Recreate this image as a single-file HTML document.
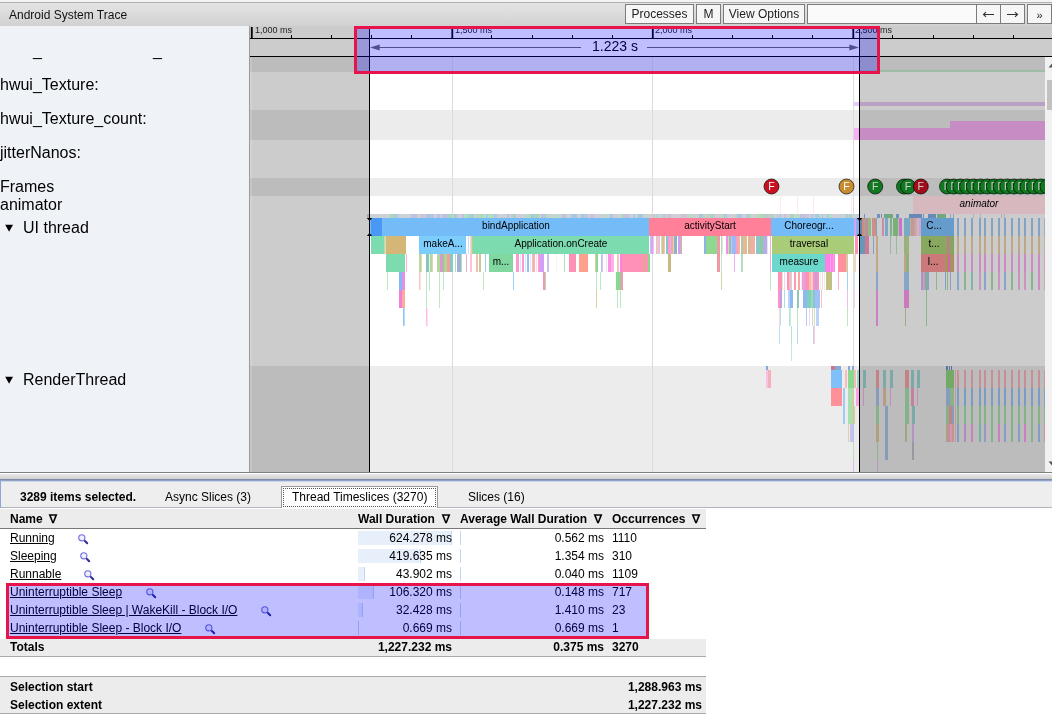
<!DOCTYPE html>
<html>
<head>
<meta charset="utf-8">
<title>Android System Trace</title>
<style>
html,body{margin:0;padding:0;}
body{width:1052px;height:720px;overflow:hidden;background:#fff;position:relative;font-family:"Liberation Sans",sans-serif;color:#000;}
.abs{position:absolute;}
#hdr{left:0;top:0;width:1052px;height:26px;background:linear-gradient(#f4f4f4 0px,#f4f4f4 2px,#e5e5e5 2px,#d1d1d1 26px);}
#hdr .title{left:9px;top:7.5px;font-size:12px;line-height:14px;color:#111;}
.btn{top:4px;height:18px;border:1px solid #7c7c7c;background:#f6f6f6;font-size:12px;line-height:19px;text-align:center;color:#222;box-sizing:content-box;}
#left{left:0;top:26px;width:249px;height:446px;background:#eff3f8;}
.lab{left:0;font-size:16px;line-height:18px;white-space:nowrap;}
.row{left:250px;width:795px;}
.sl{font-size:10px;line-height:12px;color:#000;text-align:center;white-space:nowrap;}
.tk{font-size:9px;line-height:9px;color:#222;top:26px;}
#an{left:0;top:472px;width:1052px;height:248px;background:#fff;}
.t12{font-size:12px;line-height:14px;white-space:nowrap;}
.b{font-weight:bold;}
.u{text-decoration:underline;}
.r{text-align:right;}
</style>
</head>
<body>
<div id="wrap" style="position:absolute;left:0;top:0;width:1052px;height:720px;will-change:transform;opacity:0.9999">
<!-- ======= header ======= -->
<div id="hdr" class="abs">
  <div class="abs" style="left:0;top:2px;width:1052px;height:1px;background:#b0b0b0"></div>
  <div class="abs title">Android System Trace</div>
  <div class="abs btn" style="left:625px;width:67px;">Processes</div>
  <div class="abs btn" style="left:696px;width:23px;">M</div>
  <div class="abs btn" style="left:723px;width:80px;">View Options</div>
  <div class="abs btn" style="left:807px;width:168px;background:#fafafa"></div>
  <div class="abs btn" style="left:976px;width:23px;"><svg width="13" height="9" viewBox="0 0 13 9" style="position:absolute;left:5px;top:5px"><path d="M12 4.5 H1.5 M4 2.2 L1.5 4.5 L4 6.8" fill="none" stroke="#333" stroke-width="1.1"/></svg></div>
  <div class="abs btn" style="left:1000px;width:23px;"><svg width="13" height="9" viewBox="0 0 13 9" style="position:absolute;left:5px;top:5px"><path d="M1 4.5 H11.5 M9 2.2 L11.5 4.5 L9 6.8" fill="none" stroke="#333" stroke-width="1.1"/></svg></div>
  <div class="abs btn" style="left:1027px;width:23px;line-height:21px;font-size:11px">&#187;</div>
</div>

<!-- ======= left labels ======= -->
<div id="left" class="abs"></div>
<div class="abs lab" style="left:33px;top:41.5px;">_</div>
<div class="abs lab" style="left:153px;top:41.5px;">_</div>
<div class="abs lab" style="top:76px;">hwui_Texture:</div>
<div class="abs lab" style="top:110px;">hwui_Texture_count:</div>
<div class="abs lab" style="top:144px;">jitterNanos:</div>
<div class="abs lab" style="top:178px;">Frames</div>
<div class="abs lab" style="top:196px;">animator</div>
<svg class="abs" style="left:5px;top:224px" width="9" height="8"><path d="M0.2 0.7 L8 0.7 L4.1 7.8 Z" fill="#000"/></svg>
<div class="abs lab" style="left:23px;top:219px;">UI thread</div>
<svg class="abs" style="left:5px;top:376px" width="9" height="8"><path d="M0.2 0.7 L8 0.7 L4.1 7.8 Z" fill="#000"/></svg>
<div class="abs lab" style="left:23px;top:371px;">RenderThread</div>
<div class="abs" style="left:249px;top:26px;width:1px;height:446px;background:#9a9a9a"></div>
<div class="abs" style="left:250px;top:57px;width:2px;height:415px;background:#f6f6f6"></div>

<!-- ======= track row backgrounds ======= -->
<div class="abs" style="left:250px;width:802px;top:26px;height:31px;background:#fff"></div>
<div class="abs row" style="top:57px;height:15px;background:#ececec"></div>
<div class="abs row" style="top:72px;height:38px;background:#fff"></div>
<div class="abs row" style="top:110px;height:30px;background:#ececec"></div>
<div class="abs row" style="top:140px;height:38px;background:#fff"></div>
<div class="abs row" style="top:178px;height:18px;background:#ececec"></div>
<div class="abs row" style="top:196px;height:170px;background:#fff"></div>
<div class="abs row" style="top:366px;height:106px;background:#ececec"></div>

<!-- ======= all track graphics ======= -->
<svg class="abs" style="left:0;top:0" width="1052" height="720" viewBox="0 0 1052 720" shape-rendering="crispEdges">
<!-- gridlines -->
<g fill="#dcdcdc">
<rect x="452" y="57" width="1" height="415"/>
<rect x="652" y="57" width="1" height="415"/>
<rect x="853" y="57" width="1" height="415"/>
</g>
<rect x="367" y="214" width="493" height="4" fill="#cdd0d4"/>
<rect x="390" y="214" width="1" height="4" fill="#a8d8b8"/>
<rect x="391" y="214" width="4" height="4" fill="#a8d8b8"/>
<rect x="395" y="214" width="3" height="4" fill="#b0c8e8"/>
<rect x="411" y="214" width="2" height="4" fill="#b0c8e8"/>
<rect x="413" y="214" width="4" height="4" fill="#c0c0e0"/>
<rect x="421" y="214" width="2" height="4" fill="#d0c0d8"/>
<rect x="423" y="214" width="2" height="4" fill="#d0c0d8"/>
<rect x="426" y="214" width="4" height="4" fill="#a8c8e0"/>
<rect x="430" y="214" width="4" height="4" fill="#c0c0e0"/>
<rect x="437" y="214" width="3" height="4" fill="#b0c8e8"/>
<rect x="442" y="214" width="2" height="4" fill="#c0c0e0"/>
<rect x="444" y="214" width="4" height="4" fill="#c0c0e0"/>
<rect x="448" y="214" width="3" height="4" fill="#a8d8b8"/>
<rect x="451" y="214" width="1" height="4" fill="#b0c8e8"/>
<rect x="452" y="214" width="2" height="4" fill="#b8d8c0"/>
<rect x="454" y="214" width="3" height="4" fill="#a8c8e0"/>
<rect x="462" y="214" width="2" height="4" fill="#c0c0e0"/>
<rect x="464" y="214" width="4" height="4" fill="#b0e0c0"/>
<rect x="468" y="214" width="3" height="4" fill="#a8d8b8"/>
<rect x="471" y="214" width="2" height="4" fill="#a8c8e0"/>
<rect x="473" y="214" width="1" height="4" fill="#a8c8e0"/>
<rect x="476" y="214" width="3" height="4" fill="#b8d8c0"/>
<rect x="479" y="214" width="2" height="4" fill="#b8d8c0"/>
<rect x="481" y="214" width="2" height="4" fill="#a8d8b8"/>
<rect x="483" y="214" width="3" height="4" fill="#b0e0c0"/>
<rect x="486" y="214" width="2" height="4" fill="#b0c8e8"/>
<rect x="488" y="214" width="3" height="4" fill="#b0e0c0"/>
<rect x="491" y="214" width="3" height="4" fill="#b8d8c0"/>
<rect x="494" y="214" width="3" height="4" fill="#b0c8e8"/>
<rect x="507" y="214" width="2" height="4" fill="#b0c8e8"/>
<rect x="511" y="214" width="1" height="4" fill="#d0c0d8"/>
<rect x="512" y="214" width="2" height="4" fill="#a8d8b8"/>
<rect x="514" y="214" width="2" height="4" fill="#c0c0e0"/>
<rect x="526" y="214" width="1" height="4" fill="#b0e0c0"/>
<rect x="527" y="214" width="4" height="4" fill="#b8d8c0"/>
<rect x="531" y="214" width="3" height="4" fill="#a8c8e0"/>
<rect x="534" y="214" width="3" height="4" fill="#a8d8b8"/>
<rect x="537" y="214" width="2" height="4" fill="#a8d8b8"/>
<rect x="541" y="214" width="1" height="4" fill="#b0c8e8"/>
<rect x="542" y="214" width="4" height="4" fill="#c0c0e0"/>
<rect x="546" y="214" width="4" height="4" fill="#b0e0c0"/>
<rect x="556" y="214" width="3" height="4" fill="#b0e0c0"/>
<rect x="562" y="214" width="3" height="4" fill="#c0c0e0"/>
<rect x="565" y="214" width="1" height="4" fill="#a8c8e0"/>
<rect x="571" y="214" width="2" height="4" fill="#b0c8e8"/>
<rect x="573" y="214" width="4" height="4" fill="#a8c8e0"/>
<rect x="581" y="214" width="4" height="4" fill="#a8c8e0"/>
<rect x="586" y="214" width="2" height="4" fill="#b0c8e8"/>
<rect x="590" y="214" width="4" height="4" fill="#d0c0d8"/>
<rect x="605" y="214" width="2" height="4" fill="#b8d8c0"/>
<rect x="610" y="214" width="3" height="4" fill="#a8c8e0"/>
<rect x="622" y="214" width="2" height="4" fill="#a8d8b8"/>
<rect x="624" y="214" width="2" height="4" fill="#c0c0e0"/>
<rect x="626" y="214" width="2" height="4" fill="#d0c0d8"/>
<rect x="628" y="214" width="1" height="4" fill="#a8c8e0"/>
<rect x="633" y="214" width="2" height="4" fill="#b0c8e8"/>
<rect x="638" y="214" width="2" height="4" fill="#a8c8e0"/>
<rect x="640" y="214" width="3" height="4" fill="#a8c8e0"/>
<rect x="646" y="214" width="1" height="4" fill="#b8d8c0"/>
<rect x="653" y="214" width="2" height="4" fill="#d0c0d8"/>
<rect x="655" y="214" width="2" height="4" fill="#b0e0c0"/>
<rect x="657" y="214" width="1" height="4" fill="#b0c8e8"/>
<rect x="663" y="214" width="2" height="4" fill="#b0c8e8"/>
<rect x="665" y="214" width="2" height="4" fill="#b0e0c0"/>
<rect x="667" y="214" width="4" height="4" fill="#d0c0d8"/>
<rect x="681" y="214" width="4" height="4" fill="#d0c0d8"/>
<rect x="685" y="214" width="2" height="4" fill="#d0c0d8"/>
<rect x="687" y="214" width="4" height="4" fill="#b8d8c0"/>
<rect x="693" y="214" width="2" height="4" fill="#b8d8c0"/>
<rect x="699" y="214" width="4" height="4" fill="#a8c8e0"/>
<rect x="703" y="214" width="4" height="4" fill="#b8d8c0"/>
<rect x="708" y="214" width="1" height="4" fill="#c0c0e0"/>
<rect x="710" y="214" width="4" height="4" fill="#a8d8b8"/>
<rect x="714" y="214" width="1" height="4" fill="#d0c0d8"/>
<rect x="721" y="214" width="3" height="4" fill="#b0e0c0"/>
<rect x="724" y="214" width="3" height="4" fill="#b0c8e8"/>
<rect x="735" y="214" width="2" height="4" fill="#b8d8c0"/>
<rect x="737" y="214" width="3" height="4" fill="#a8c8e0"/>
<rect x="740" y="214" width="2" height="4" fill="#b0c8e8"/>
<rect x="746" y="214" width="2" height="4" fill="#b0c8e8"/>
<rect x="748" y="214" width="3" height="4" fill="#a8d8b8"/>
<rect x="756" y="214" width="2" height="4" fill="#b8d8c0"/>
<rect x="758" y="214" width="4" height="4" fill="#b8d8c0"/>
<rect x="762" y="214" width="2" height="4" fill="#a8d8b8"/>
<rect x="764" y="214" width="2" height="4" fill="#d0c0d8"/>
<rect x="766" y="214" width="3" height="4" fill="#a8d8b8"/>
<rect x="769" y="214" width="3" height="4" fill="#d0c0d8"/>
<rect x="772" y="214" width="2" height="4" fill="#a8d8b8"/>
<rect x="777" y="214" width="1" height="4" fill="#c0c0e0"/>
<rect x="779" y="214" width="2" height="4" fill="#b0c8e8"/>
<rect x="784" y="214" width="2" height="4" fill="#d0c0d8"/>
<rect x="790" y="214" width="2" height="4" fill="#a8d8b8"/>
<rect x="792" y="214" width="2" height="4" fill="#a8d8b8"/>
<rect x="798" y="214" width="2" height="4" fill="#b0e0c0"/>
<rect x="800" y="214" width="1" height="4" fill="#c0c0e0"/>
<rect x="801" y="214" width="4" height="4" fill="#c0c0e0"/>
<rect x="805" y="214" width="4" height="4" fill="#d0c0d8"/>
<rect x="811" y="214" width="2" height="4" fill="#b0c8e8"/>
<rect x="815" y="214" width="2" height="4" fill="#b0c8e8"/>
<rect x="817" y="214" width="2" height="4" fill="#a8c8e0"/>
<rect x="819" y="214" width="2" height="4" fill="#b0e0c0"/>
<rect x="822" y="214" width="1" height="4" fill="#a8c8e0"/>
<rect x="827" y="214" width="2" height="4" fill="#b0c8e8"/>
<rect x="829" y="214" width="3" height="4" fill="#b0e0c0"/>
<rect x="844" y="214" width="2" height="4" fill="#b0e0c0"/>
<rect x="846" y="214" width="2" height="4" fill="#c0c0e0"/>
<rect x="849" y="214" width="1" height="4" fill="#a8c8e0"/>
<rect x="850" y="214" width="2" height="4" fill="#a8d8b8"/>
<rect x="858" y="214" width="2" height="4" fill="#b0c8e8"/>
<rect x="864" y="214" width="1" height="4" fill="#8cb4f0"/>
<rect x="877" y="214" width="3" height="4" fill="#8cb4f0"/>
<rect x="881" y="214" width="1" height="4" fill="#8cb4f0"/>
<rect x="884" y="214" width="9" height="4" fill="#8cd2a0"/>
<rect x="896" y="214" width="3" height="4" fill="#8cb4f0"/>
<rect x="909" y="214" width="13" height="4" fill="#82aae6"/>
<rect x="923" y="214" width="1" height="4" fill="#8cb4f0"/>
<rect x="928" y="214" width="8" height="4" fill="#82aae6"/>
<rect x="937" y="214" width="9" height="4" fill="#8cd2a0"/>
<rect x="950" y="214" width="1" height="4" fill="#b8c8e8"/>
<rect x="953" y="214" width="1" height="4" fill="#b8c8e8"/>
<rect x="973" y="214" width="1" height="4" fill="#d8dce8"/>
<rect x="980" y="214" width="1" height="4" fill="#d8dce8"/>
<rect x="1001" y="214" width="1" height="4" fill="#d8dce8"/>
<rect x="1004" y="214" width="1" height="4" fill="#d8dce8"/>
<rect x="370" y="218" width="279" height="18" fill="#74bcf8"/>
<rect x="371" y="218" width="11" height="18" fill="#4a98f4"/>
<rect x="649" y="218" width="122" height="18" fill="#ff8098"/>
<rect x="771" y="218" width="83" height="18" fill="#74bcf8"/>
<rect x="854" y="218" width="2" height="18" fill="#d8a0f8"/>
<rect x="856" y="218" width="3" height="18" fill="#88b0e8"/>
<rect x="371" y="236" width="13" height="18" fill="#7ddbb0"/>
<rect x="385" y="236" width="1" height="18" fill="#a0e0a8" opacity="0.7"/>
<rect x="386" y="236" width="20" height="18" fill="#d4b676"/>
<rect x="384" y="236" width="1" height="18" fill="#d4b676" opacity="0.7"/>
<rect x="419" y="236" width="47" height="18" fill="#7cccfc"/>
<rect x="468" y="236" width="1" height="18" fill="#c0c8f0" opacity="0.7"/>
<rect x="470" y="236" width="1" height="18" fill="#e8c4c8" opacity="0.7"/>
<rect x="471" y="236" width="1" height="18" fill="#d0c090" opacity="0.7"/>
<rect x="472" y="236" width="2" height="18" fill="#a8d098"/>
<rect x="473" y="236" width="176" height="18" fill="#7ddbb0"/>
<rect x="650" y="236" width="1" height="18" fill="#90b8f0" opacity="0.7"/>
<rect x="651" y="236" width="2" height="18" fill="#e0a0f8"/>
<rect x="653" y="236" width="1" height="18" fill="#ffa0e0" opacity="0.7"/>
<rect x="656" y="236" width="1" height="18" fill="#e8a0b8" opacity="0.7"/>
<rect x="657" y="236" width="1" height="18" fill="#d8c090" opacity="0.7"/>
<rect x="658" y="236" width="1" height="18" fill="#d0a8e0" opacity="0.7"/>
<rect x="659" y="236" width="1" height="18" fill="#f0a0c0" opacity="0.7"/>
<rect x="661" y="236" width="1" height="18" fill="#b8d0a0" opacity="0.7"/>
<rect x="662" y="236" width="2" height="18" fill="#d8c090"/>
<rect x="664" y="236" width="1" height="18" fill="#f8a898" opacity="0.7"/>
<rect x="666" y="236" width="2" height="18" fill="#80c8c0"/>
<rect x="668" y="236" width="2" height="18" fill="#ff98d8"/>
<rect x="670" y="236" width="1" height="18" fill="#f080e0" opacity="0.7"/>
<rect x="671" y="236" width="2" height="18" fill="#e0b0a0"/>
<rect x="673" y="236" width="1" height="18" fill="#f0b098" opacity="0.7"/>
<rect x="674" y="236" width="3" height="18" fill="#90b0c8"/>
<rect x="678" y="236" width="2" height="18" fill="#d0a0f0"/>
<rect x="680" y="236" width="2" height="18" fill="#d0b0b8"/>
<rect x="704" y="236" width="2" height="18" fill="#90b0e8"/>
<rect x="706" y="236" width="11" height="18" fill="#90d890"/>
<rect x="717" y="236" width="3" height="18" fill="#f098a8"/>
<rect x="721" y="236" width="1" height="18" fill="#90c8a0" opacity="0.7"/>
<rect x="722" y="236" width="1" height="18" fill="#c8e4d0" opacity="0.7"/>
<rect x="726" y="236" width="2" height="18" fill="#f090e8"/>
<rect x="728" y="236" width="1" height="18" fill="#d8c090" opacity="0.7"/>
<rect x="729" y="236" width="2" height="18" fill="#90c0c0"/>
<rect x="731" y="236" width="1" height="18" fill="#a0b0d0" opacity="0.7"/>
<rect x="732" y="236" width="4" height="18" fill="#a0b8f8"/>
<rect x="736" y="236" width="2" height="18" fill="#f8a0c0"/>
<rect x="738" y="236" width="2" height="18" fill="#f8b0a0"/>
<rect x="741" y="236" width="2" height="18" fill="#a8c8b0"/>
<rect x="743" y="236" width="4" height="18" fill="#e8b890"/>
<rect x="748" y="236" width="3" height="18" fill="#d8b898"/>
<rect x="751" y="236" width="4" height="18" fill="#f0b0a0"/>
<rect x="756" y="236" width="4" height="18" fill="#88c8c8"/>
<rect x="760" y="236" width="3" height="18" fill="#90c8a0"/>
<rect x="763" y="236" width="4" height="18" fill="#b0b0e8"/>
<rect x="767" y="236" width="1" height="18" fill="#f8d0e8" opacity="0.7"/>
<rect x="770" y="236" width="1" height="18" fill="#f890c0" opacity="0.7"/>
<rect x="772" y="236" width="82" height="18" fill="#a8cc78"/>
<rect x="855" y="236" width="3" height="18" fill="#ff90b8"/>
<rect x="386" y="254" width="19" height="18" fill="#7ddbb0"/>
<rect x="406" y="254" width="1" height="18" fill="#ff90b8" opacity="0.7"/>
<rect x="419" y="254" width="2" height="18" fill="#b8d8a0"/>
<rect x="421" y="254" width="1" height="18" fill="#d8c8a0" opacity="0.7"/>
<rect x="426" y="254" width="3" height="18" fill="#90c0c0"/>
<rect x="429" y="254" width="1" height="18" fill="#d8f0d0" opacity="0.7"/>
<rect x="430" y="254" width="2" height="18" fill="#b0d8a0"/>
<rect x="432" y="254" width="1" height="18" fill="#d0c890" opacity="0.7"/>
<rect x="437" y="254" width="3" height="18" fill="#b0d8a0"/>
<rect x="440" y="254" width="2" height="18" fill="#e890d8"/>
<rect x="442" y="254" width="2" height="18" fill="#a0c0a0"/>
<rect x="444" y="254" width="3" height="18" fill="#b8d098"/>
<rect x="447" y="254" width="3" height="18" fill="#f0a098"/>
<rect x="450" y="254" width="3" height="18" fill="#88c8c8"/>
<rect x="455" y="254" width="1" height="18" fill="#88d890" opacity="0.7"/>
<rect x="457" y="254" width="4" height="18" fill="#a0b0d8"/>
<rect x="461" y="254" width="1" height="18" fill="#88d890" opacity="0.7"/>
<rect x="466" y="254" width="1" height="18" fill="#e090b8" opacity="0.7"/>
<rect x="470" y="254" width="2" height="18" fill="#ffc0d8"/>
<rect x="476" y="254" width="1" height="18" fill="#ff90b8" opacity="0.7"/>
<rect x="477" y="254" width="1" height="18" fill="#d4b676" opacity="0.7"/>
<rect x="479" y="254" width="2" height="18" fill="#c8c890"/>
<rect x="485" y="254" width="1" height="18" fill="#88b0e8" opacity="0.7"/>
<rect x="489" y="254" width="24" height="18" fill="#80d8a0"/>
<rect x="516" y="254" width="3" height="18" fill="#ff98d0"/>
<rect x="520" y="254" width="1" height="18" fill="#c0e0fc" opacity="0.7"/>
<rect x="522" y="254" width="2" height="18" fill="#ff98d0"/>
<rect x="525" y="254" width="1" height="18" fill="#c0e0fc" opacity="0.7"/>
<rect x="527" y="254" width="2" height="18" fill="#90c0f0"/>
<rect x="530" y="254" width="1" height="18" fill="#e8d8f8" opacity="0.7"/>
<rect x="532" y="254" width="1" height="18" fill="#d4b676" opacity="0.7"/>
<rect x="533" y="254" width="2" height="18" fill="#ffa8c8"/>
<rect x="536" y="254" width="1" height="18" fill="#ffd0e0" opacity="0.7"/>
<rect x="538" y="254" width="2" height="18" fill="#ff98d0"/>
<rect x="540" y="254" width="4" height="18" fill="#d0a0f8"/>
<rect x="547" y="254" width="2" height="18" fill="#c8c0f4"/>
<rect x="556" y="254" width="1" height="18" fill="#e8f4e8" opacity="0.7"/>
<rect x="564" y="254" width="1" height="18" fill="#88d890" opacity="0.7"/>
<rect x="569" y="254" width="7" height="18" fill="#ff90b8"/>
<rect x="579" y="254" width="9" height="18" fill="#ffa08c"/>
<rect x="595" y="254" width="1" height="18" fill="#d4b676" opacity="0.7"/>
<rect x="596" y="254" width="2" height="18" fill="#88d890"/>
<rect x="601" y="254" width="1" height="18" fill="#88b0e8" opacity="0.7"/>
<rect x="602" y="254" width="1" height="18" fill="#d8a0f8" opacity="0.7"/>
<rect x="606" y="254" width="1" height="18" fill="#ffd0e8" opacity="0.7"/>
<rect x="608" y="254" width="3" height="18" fill="#ff90e0"/>
<rect x="611" y="254" width="3" height="18" fill="#ffb0e8"/>
<rect x="617" y="254" width="1" height="18" fill="#d4b676" opacity="0.7"/>
<rect x="618" y="254" width="1" height="18" fill="#ffa8c8" opacity="0.7"/>
<rect x="620" y="254" width="2" height="18" fill="#ff80e0"/>
<rect x="622" y="254" width="28" height="18" fill="#ff90b8"/>
<rect x="642" y="254" width="1" height="18" fill="#d4b676" opacity="0.7"/>
<rect x="645" y="254" width="1" height="18" fill="#d4b676" opacity="0.7"/>
<rect x="648" y="254" width="2" height="18" fill="#88d890"/>
<rect x="668" y="254" width="3" height="18" fill="#c8b880"/>
<rect x="717" y="254" width="3" height="18" fill="#f098a0"/>
<rect x="721" y="254" width="1" height="18" fill="#b0d8b8" opacity="0.7"/>
<rect x="734" y="254" width="1" height="18" fill="#e890e0" opacity="0.7"/>
<rect x="741" y="254" width="2" height="18" fill="#b8dcc0"/>
<rect x="770" y="254" width="1" height="18" fill="#ff80e0" opacity="0.7"/>
<rect x="772" y="254" width="53" height="18" fill="#6cd8cc"/>
<rect x="825" y="254" width="10" height="18" fill="#ff80e8"/>
<rect x="830" y="254" width="1" height="18" fill="#ffb0f0" opacity="0.7"/>
<rect x="833" y="254" width="1" height="18" fill="#ffb0f0" opacity="0.7"/>
<rect x="838" y="254" width="8" height="18" fill="#ff90a0"/>
<rect x="846" y="254" width="2" height="18" fill="#d8c8a0"/>
<rect x="854" y="254" width="2" height="18" fill="#f0d8c0"/>
<rect x="387" y="272" width="1" height="18" fill="#a0e0a8" opacity="0.7"/>
<rect x="419" y="272" width="1" height="18" fill="#f0b0a8" opacity="0.7"/>
<rect x="420" y="272" width="1" height="18" fill="#f8d8d0" opacity="0.7"/>
<rect x="426" y="272" width="1" height="18" fill="#a0e0a8" opacity="0.7"/>
<rect x="429" y="272" width="1" height="18" fill="#a0e0a8" opacity="0.7"/>
<rect x="439" y="272" width="1" height="18" fill="#a0e0a8" opacity="0.7"/>
<rect x="443" y="272" width="1" height="18" fill="#a0e0a8" opacity="0.7"/>
<rect x="483" y="272" width="1" height="18" fill="#a0e0a8" opacity="0.7"/>
<rect x="513" y="272" width="1" height="18" fill="#74bcf8" opacity="0.7"/>
<rect x="596" y="272" width="1" height="18" fill="#a0e0a8" opacity="0.7"/>
<rect x="600" y="272" width="1" height="18" fill="#a0e0a8" opacity="0.7"/>
<rect x="721" y="272" width="1" height="18" fill="#c0c080" opacity="0.7"/>
<rect x="770" y="272" width="1" height="18" fill="#a0e0a8" opacity="0.7"/>
<rect x="838" y="272" width="1" height="18" fill="#ff90b8" opacity="0.7"/>
<rect x="847" y="272" width="1" height="18" fill="#74bcf8" opacity="0.7"/>
<rect x="399" y="272" width="3" height="18" fill="#88b8f0"/>
<rect x="402" y="272" width="3" height="18" fill="#e090e8"/>
<rect x="543" y="272" width="2" height="18" fill="#ff90b8"/>
<rect x="545" y="272" width="1" height="18" fill="#88d890" opacity="0.7"/>
<rect x="616" y="272" width="5" height="18" fill="#88d890"/>
<rect x="621" y="272" width="2" height="18" fill="#ff90b8"/>
<rect x="778" y="272" width="4" height="18" fill="#ff90b8"/>
<rect x="782" y="272" width="1" height="18" fill="#c8e8c8" opacity="0.7"/>
<rect x="784" y="272" width="1" height="18" fill="#ffc0d8" opacity="0.7"/>
<rect x="787" y="272" width="2" height="18" fill="#ff90b8"/>
<rect x="789" y="272" width="2" height="18" fill="#ffb0d0"/>
<rect x="791" y="272" width="1" height="18" fill="#a0d8a0" opacity="0.7"/>
<rect x="794" y="272" width="2" height="18" fill="#ff98b0"/>
<rect x="798" y="272" width="2" height="18" fill="#f8a8a0"/>
<rect x="801" y="272" width="1" height="18" fill="#f8e0e8" opacity="0.7"/>
<rect x="802" y="272" width="3" height="18" fill="#e8a0e0"/>
<rect x="805" y="272" width="4" height="18" fill="#ff90b8"/>
<rect x="809" y="272" width="2" height="18" fill="#f8c0a0"/>
<rect x="811" y="272" width="2" height="18" fill="#ffc8d8"/>
<rect x="813" y="272" width="2" height="18" fill="#ff90b8"/>
<rect x="815" y="272" width="2" height="18" fill="#c0a0e8"/>
<rect x="817" y="272" width="2" height="18" fill="#ff90b8"/>
<rect x="820" y="272" width="1" height="18" fill="#d0ecd0" opacity="0.7"/>
<rect x="822" y="272" width="1" height="18" fill="#f8c0d0" opacity="0.7"/>
<rect x="824" y="272" width="1" height="18" fill="#ffd8e4" opacity="0.7"/>
<rect x="826" y="272" width="6" height="18" fill="#c0c080"/>
<rect x="854" y="272" width="1" height="18" fill="#c0d8f8" opacity="0.7"/>
<rect x="399" y="290" width="3" height="18" fill="#f080d0"/>
<rect x="402" y="290" width="3" height="18" fill="#ffa8a0"/>
<rect x="426" y="290" width="1" height="18" fill="#a0e0a8" opacity="0.7"/>
<rect x="439" y="290" width="1" height="18" fill="#a0e0a8" opacity="0.7"/>
<rect x="596" y="290" width="1" height="18" fill="#d4b676" opacity="0.7"/>
<rect x="617" y="290" width="1" height="18" fill="#a0e0a8" opacity="0.7"/>
<rect x="620" y="290" width="1" height="18" fill="#a0e0a8" opacity="0.7"/>
<rect x="778" y="290" width="2" height="18" fill="#ff90c8"/>
<rect x="780" y="290" width="2" height="18" fill="#c0a0e0"/>
<rect x="784" y="290" width="1" height="18" fill="#90c8e0" opacity="0.7"/>
<rect x="788" y="290" width="2" height="18" fill="#b8d4f8"/>
<rect x="790" y="290" width="3" height="18" fill="#90b8f0"/>
<rect x="797" y="290" width="2" height="18" fill="#90c8b0"/>
<rect x="803" y="290" width="4" height="18" fill="#90b8f0"/>
<rect x="807" y="290" width="4" height="18" fill="#80d0c0"/>
<rect x="811" y="290" width="2" height="18" fill="#a0d8b0"/>
<rect x="813" y="290" width="2" height="18" fill="#88c4d8"/>
<rect x="815" y="290" width="5" height="18" fill="#a0c0f8"/>
<rect x="821" y="290" width="1" height="18" fill="#f8a8a0" opacity="0.7"/>
<rect x="847" y="290" width="1" height="18" fill="#f0a0e0" opacity="0.7"/>
<rect x="854" y="290" width="1" height="18" fill="#f8c0e8" opacity="0.7"/>
<rect x="403" y="308" width="1" height="18" fill="#60a8f0" opacity="0.7"/>
<rect x="404" y="308" width="1" height="18" fill="#a0d0f8" opacity="0.7"/>
<rect x="426" y="308" width="1" height="18" fill="#ffa0e0" opacity="0.7"/>
<rect x="427" y="308" width="1" height="18" fill="#ffd0f0" opacity="0.7"/>
<rect x="779" y="308" width="1" height="18" fill="#f8c8c0" opacity="0.7"/>
<rect x="780" y="308" width="1" height="18" fill="#a0d0f0" opacity="0.7"/>
<rect x="789" y="308" width="1" height="18" fill="#a0d8b0" opacity="0.7"/>
<rect x="790" y="308" width="1" height="18" fill="#b0e0d8" opacity="0.7"/>
<rect x="797" y="308" width="1" height="18" fill="#a0e0a8" opacity="0.7"/>
<rect x="806" y="308" width="1" height="18" fill="#a0b0f0" opacity="0.7"/>
<rect x="809" y="308" width="1" height="18" fill="#d8d0f0" opacity="0.7"/>
<rect x="812" y="308" width="1" height="18" fill="#e8b0b0" opacity="0.7"/>
<rect x="814" y="308" width="1" height="18" fill="#a0e0a8" opacity="0.7"/>
<rect x="816" y="308" width="1" height="18" fill="#a0c0f8" opacity="0.7"/>
<rect x="817" y="308" width="1" height="18" fill="#a0c0f8" opacity="0.7"/>
<rect x="818" y="308" width="1" height="18" fill="#a0c0f8" opacity="0.7"/>
<rect x="847" y="308" width="1" height="18" fill="#a0e0a8" opacity="0.7"/>
<rect x="779" y="326" width="1" height="18" fill="#a0d0f0" opacity="0.7"/>
<rect x="791" y="326" width="1" height="18" fill="#a0d8b0" opacity="0.7"/>
<rect x="797" y="326" width="1" height="18" fill="#a0c0f0" opacity="0.7"/>
<rect x="813" y="326" width="1" height="18" fill="#a0c0f0" opacity="0.7"/>
<rect x="814" y="326" width="1" height="18" fill="#f8b8b0" opacity="0.7"/>
<rect x="791" y="344" width="1" height="17" fill="#b0e0c0" opacity="0.7"/>
<rect x="860" y="218" width="2" height="18" fill="#88a8d0"/>
<rect x="862" y="218" width="2" height="18" fill="#ffb0a0"/>
<rect x="864" y="218" width="1" height="18" fill="#d4b676" opacity="0.7"/>
<rect x="865" y="218" width="3" height="18" fill="#e8b4c8"/>
<rect x="868" y="218" width="3" height="18" fill="#b4e6aa"/>
<rect x="872" y="218" width="4" height="18" fill="#ffb4aa"/>
<rect x="876" y="218" width="1" height="18" fill="#88b0e8" opacity="0.7"/>
<rect x="878" y="218" width="1" height="18" fill="#ffffff" opacity="0.7"/>
<rect x="882" y="218" width="2" height="18" fill="#ffb0cc"/>
<rect x="885" y="218" width="3" height="18" fill="#96d2ff"/>
<rect x="890" y="218" width="2" height="18" fill="#a0dcaa"/>
<rect x="893" y="218" width="5" height="18" fill="#96dc96"/>
<rect x="898" y="218" width="1" height="18" fill="#d0f0d0" opacity="0.7"/>
<rect x="899" y="218" width="3" height="18" fill="#ff8cff"/>
<rect x="904" y="218" width="6" height="18" fill="#96d2ff"/>
<rect x="906" y="218" width="1" height="18" fill="#a0dcaa" opacity="0.7"/>
<rect x="910" y="218" width="1" height="18" fill="#c8dca0" opacity="0.7"/>
<rect x="911" y="218" width="2" height="18" fill="#ffb4c8"/>
<rect x="913" y="218" width="2" height="18" fill="#f0c8b4"/>
<rect x="915" y="218" width="2" height="18" fill="#ffd0e4"/>
<rect x="917" y="218" width="2" height="18" fill="#ffe4f0"/>
<rect x="919" y="218" width="2" height="18" fill="#ffd0ff"/>
<rect x="860" y="236" width="5" height="18" fill="#82bee6"/>
<rect x="865" y="236" width="4" height="18" fill="#ff98be"/>
<rect x="873" y="236" width="1" height="18" fill="#88b0e8" opacity="0.7"/>
<rect x="876" y="236" width="2" height="18" fill="#f4d0a8"/>
<rect x="890" y="236" width="1" height="18" fill="#a0e0a8" opacity="0.7"/>
<rect x="896" y="236" width="1" height="18" fill="#a0e0a8" opacity="0.7"/>
<rect x="904" y="236" width="5" height="18" fill="#c4dc9c"/>
<rect x="876" y="254" width="2" height="18" fill="#f4d0a8"/>
<rect x="904" y="254" width="2" height="18" fill="#ecd0a8"/>
<rect x="906" y="254" width="3" height="18" fill="#b4dca0"/>
<rect x="876" y="272" width="2" height="18" fill="#a8d0fc"/>
<rect x="904" y="272" width="5" height="18" fill="#a8d0fc"/>
<rect x="876" y="290" width="2" height="18" fill="#ffa0f4"/>
<rect x="904" y="290" width="5" height="18" fill="#ff98ec"/>
<rect x="876" y="308" width="2" height="18" fill="#ffa0f4"/>
<rect x="905" y="308" width="1" height="18" fill="#c0c080" opacity="0.7"/>
<rect x="921" y="218" width="33" height="18" fill="#80c4ff"/>
<rect x="921" y="236" width="26" height="18" fill="#aad278"/>
<rect x="947" y="236" width="2" height="18" fill="#ff90b8"/>
<rect x="949" y="236" width="5" height="18" fill="#a8cc78"/>
<rect x="921" y="254" width="24" height="18" fill="#ff9898"/>
<rect x="945" y="254" width="3" height="18" fill="#d4b676"/>
<rect x="948" y="254" width="2" height="18" fill="#ff80e0"/>
<rect x="950" y="254" width="4" height="18" fill="#d4b676"/>
<rect x="921" y="272" width="2" height="18" fill="#dcb4fa"/>
<rect x="923" y="272" width="2" height="18" fill="#fabefa"/>
<rect x="925" y="272" width="2" height="18" fill="#a0dcaa"/>
<rect x="927" y="272" width="2" height="18" fill="#aac8ff"/>
<rect x="936" y="272" width="1" height="18" fill="#88d890" opacity="0.7"/>
<rect x="945" y="272" width="1" height="18" fill="#88b0e8" opacity="0.7"/>
<rect x="947" y="272" width="1" height="18" fill="#88d890" opacity="0.7"/>
<rect x="950" y="272" width="1" height="18" fill="#88b0e8" opacity="0.7"/>
<rect x="926" y="290" width="1" height="18" fill="#88d890" opacity="0.7"/>
<rect x="926" y="308" width="1" height="18" fill="#88d890" opacity="0.7"/>
<rect x="957" y="218" width="2" height="18" fill="#a4ccf8"/>
<rect x="957" y="236" width="2" height="18" fill="#ecd2a8"/>
<rect x="957" y="254" width="2" height="18" fill="#ffb0f4"/>
<rect x="957" y="272" width="2" height="18" fill="#a8d0fc"/>
<rect x="964" y="218" width="2" height="18" fill="#a4ccf8"/>
<rect x="964" y="236" width="2" height="18" fill="#ecd2a8"/>
<rect x="964" y="254" width="2" height="18" fill="#ffb0f4"/>
<rect x="964" y="272" width="2" height="18" fill="#a8e4b4"/>
<rect x="971" y="218" width="2" height="18" fill="#a4ccf8"/>
<rect x="971" y="236" width="2" height="18" fill="#ecd2a8"/>
<rect x="971" y="254" width="2" height="18" fill="#ffb0f4"/>
<rect x="971" y="272" width="2" height="18" fill="#9ce4d0"/>
<rect x="979" y="218" width="2" height="18" fill="#a4ccf8"/>
<rect x="979" y="236" width="2" height="18" fill="#ecd2a8"/>
<rect x="979" y="254" width="2" height="18" fill="#ffb0f4"/>
<rect x="979" y="272" width="2" height="18" fill="#f8bcf0"/>
<rect x="984" y="218" width="2" height="18" fill="#a4ccf8"/>
<rect x="984" y="236" width="2" height="18" fill="#ecd2a8"/>
<rect x="984" y="254" width="2" height="18" fill="#ffb0f4"/>
<rect x="984" y="272" width="2" height="18" fill="#a8d0fc"/>
<rect x="991" y="218" width="2" height="18" fill="#a4ccf8"/>
<rect x="991" y="236" width="2" height="18" fill="#ecd2a8"/>
<rect x="991" y="254" width="2" height="18" fill="#ffb0f4"/>
<rect x="991" y="272" width="2" height="18" fill="#a8e4b4"/>
<rect x="998" y="218" width="2" height="18" fill="#a4ccf8"/>
<rect x="998" y="236" width="2" height="18" fill="#ecd2a8"/>
<rect x="998" y="254" width="2" height="18" fill="#ffb0f4"/>
<rect x="998" y="272" width="2" height="18" fill="#f8bcf0"/>
<rect x="1004" y="218" width="2" height="18" fill="#a4ccf8"/>
<rect x="1004" y="236" width="2" height="18" fill="#ecd2a8"/>
<rect x="1004" y="254" width="2" height="18" fill="#ffb0f4"/>
<rect x="1004" y="272" width="2" height="18" fill="#a8d0fc"/>
<rect x="1011" y="218" width="2" height="18" fill="#a4ccf8"/>
<rect x="1011" y="236" width="2" height="18" fill="#ecd2a8"/>
<rect x="1011" y="254" width="2" height="18" fill="#ffb0f4"/>
<rect x="1011" y="272" width="2" height="18" fill="#a8e4b4"/>
<rect x="1018" y="218" width="2" height="18" fill="#a4ccf8"/>
<rect x="1018" y="236" width="2" height="18" fill="#ecd2a8"/>
<rect x="1018" y="254" width="2" height="18" fill="#ffb0f4"/>
<rect x="1018" y="272" width="2" height="18" fill="#f8bcf0"/>
<rect x="1024" y="218" width="2" height="18" fill="#a4ccf8"/>
<rect x="1024" y="236" width="2" height="18" fill="#ecd2a8"/>
<rect x="1024" y="254" width="2" height="18" fill="#ffb0f4"/>
<rect x="1024" y="272" width="2" height="18" fill="#f8bcf0"/>
<rect x="1031" y="218" width="2" height="18" fill="#a4ccf8"/>
<rect x="1031" y="236" width="2" height="18" fill="#ecd2a8"/>
<rect x="1031" y="254" width="2" height="18" fill="#ffb0f4"/>
<rect x="1031" y="272" width="2" height="18" fill="#a8e4b4"/>
<rect x="1038" y="218" width="2" height="18" fill="#a4ccf8"/>
<rect x="1038" y="236" width="2" height="18" fill="#ecd2a8"/>
<rect x="1038" y="254" width="2" height="18" fill="#ffb0f4"/>
<rect x="1038" y="272" width="2" height="18" fill="#ffb0f4"/>
<rect x="1044" y="218" width="1" height="18" fill="#a4ccf8" opacity="0.7"/>
<rect x="1044" y="236" width="1" height="18" fill="#ecd2a8" opacity="0.7"/>
<rect x="1044" y="254" width="1" height="18" fill="#ffb0f4" opacity="0.7"/>
<rect x="1044" y="272" width="1" height="18" fill="#f8bcf0" opacity="0.7"/>
<rect x="766" y="366" width="2" height="4" fill="#88a8d8"/>
<rect x="831" y="366" width="4" height="4" fill="#c87890"/>
<rect x="835" y="366" width="6" height="4" fill="#88a8d8"/>
<rect x="848" y="366" width="2" height="4" fill="#88a8d8"/>
<rect x="852" y="366" width="2" height="4" fill="#88a8d8"/>
<rect x="946" y="366" width="2" height="4" fill="#7090c8"/>
<rect x="949" y="366" width="1" height="4" fill="#7090c8"/>
<rect x="951" y="366" width="1" height="4" fill="#7090c8"/>
<rect x="766" y="370" width="2" height="18" fill="#ffb0d8" opacity="0.68"/>
<rect x="768" y="370" width="3" height="18" fill="#f890a8" opacity="0.68"/>
<rect x="831" y="370" width="11" height="18" fill="#80c0f8"/>
<rect x="845" y="370" width="2" height="18" fill="#ffa0a8" opacity="0.68"/>
<rect x="848" y="370" width="6" height="18" fill="#88d890"/>
<rect x="854" y="370" width="2" height="18" fill="#ffa08c" opacity="0.68"/>
<rect x="857" y="370" width="2" height="18" fill="#70c8c8" opacity="0.68"/>
<rect x="831" y="388" width="11" height="18" fill="#ff9098"/>
<rect x="843" y="388" width="2" height="18" fill="#74bcf8" opacity="0.68"/>
<rect x="848" y="388" width="4" height="18" fill="#88d890" opacity="0.68"/>
<rect x="852" y="388" width="2" height="18" fill="#c0c080" opacity="0.68"/>
<rect x="856" y="388" width="3" height="18" fill="#ff80e0" opacity="0.68"/>
<rect x="843" y="406" width="2" height="18" fill="#74bcf8" opacity="0.68"/>
<rect x="848" y="406" width="4" height="18" fill="#88d890" opacity="0.68"/>
<rect x="852" y="406" width="3" height="18" fill="#c0c080" opacity="0.68"/>
<rect x="848" y="424" width="1" height="18" fill="#d4b676" opacity="0.55"/>
<rect x="850" y="424" width="4" height="18" fill="#b0b0f0" opacity="0.68"/>
<rect x="853" y="442" width="1" height="18" fill="#a0e0a8" opacity="0.55"/>
<rect x="853" y="460" width="1" height="12" fill="#d8a0f8" opacity="0.55"/>
<rect x="863" y="370" width="3" height="18" fill="#70c8c8" opacity="0.68"/>
<rect x="876" y="370" width="3" height="18" fill="#f88088" opacity="0.68"/>
<rect x="883" y="370" width="3" height="18" fill="#70c8c8" opacity="0.68"/>
<rect x="890" y="370" width="3" height="18" fill="#70c8c8" opacity="0.68"/>
<rect x="863" y="388" width="1" height="18" fill="#ff80e0" opacity="0.55"/>
<rect x="876" y="388" width="3" height="18" fill="#88b0e8" opacity="0.68"/>
<rect x="883" y="388" width="1" height="18" fill="#ff90b8" opacity="0.55"/>
<rect x="884" y="388" width="2" height="18" fill="#d4b676" opacity="0.68"/>
<rect x="890" y="388" width="1" height="18" fill="#ff80e0" opacity="0.55"/>
<rect x="876" y="406" width="3" height="18" fill="#88d890" opacity="0.68"/>
<rect x="885" y="406" width="3" height="18" fill="#88b0e8" opacity="0.68"/>
<rect x="876" y="424" width="3" height="18" fill="#d4b676" opacity="0.68"/>
<rect x="885" y="424" width="3" height="18" fill="#88b0e8" opacity="0.68"/>
<rect x="877" y="442" width="1" height="18" fill="#88d890" opacity="0.55"/>
<rect x="885" y="442" width="3" height="18" fill="#88b0e8" opacity="0.68"/>
<rect x="877" y="460" width="1" height="12" fill="#d8a0f8" opacity="0.55"/>
<rect x="905" y="370" width="4" height="18" fill="#f88088" opacity="0.68"/>
<rect x="911" y="370" width="3" height="18" fill="#70c8c8" opacity="0.68"/>
<rect x="917" y="370" width="3" height="18" fill="#70c8c8" opacity="0.68"/>
<rect x="905" y="388" width="4" height="18" fill="#88d890" opacity="0.68"/>
<rect x="911" y="388" width="3" height="18" fill="#f880b0" opacity="0.68"/>
<rect x="917" y="388" width="1" height="18" fill="#ff80e0" opacity="0.55"/>
<rect x="905" y="406" width="4" height="18" fill="#88d890" opacity="0.68"/>
<rect x="912" y="406" width="3" height="18" fill="#70c8c8" opacity="0.68"/>
<rect x="905" y="424" width="2" height="18" fill="#c0c080" opacity="0.68"/>
<rect x="912" y="424" width="2" height="18" fill="#d8a0f8" opacity="0.68"/>
<rect x="912" y="442" width="2" height="18" fill="#a8a8b8" opacity="0.68"/>
<rect x="946" y="370" width="8" height="18" fill="#90d480"/>
<rect x="955" y="370" width="1" height="18" fill="#ff98a4" opacity="0.55"/>
<rect x="955" y="388" width="1" height="18" fill="#ff98a4" opacity="0.55"/>
<rect x="955" y="406" width="1" height="18" fill="#ff98a4" opacity="0.55"/>
<rect x="955" y="424" width="1" height="18" fill="#ff98a4" opacity="0.55"/>
<rect x="946" y="388" width="4" height="18" fill="#88b0e8" opacity="0.68"/>
<rect x="950" y="388" width="4" height="18" fill="#88d890" opacity="0.68"/>
<rect x="946" y="406" width="3" height="18" fill="#88d890" opacity="0.68"/>
<rect x="949" y="406" width="3" height="18" fill="#f88088" opacity="0.68"/>
<rect x="952" y="406" width="2" height="18" fill="#88b0e8" opacity="0.68"/>
<rect x="946" y="424" width="2" height="18" fill="#d4b676" opacity="0.68"/>
<rect x="948" y="424" width="2" height="18" fill="#ff90b8" opacity="0.68"/>
<rect x="950" y="424" width="2" height="18" fill="#ffb0d8" opacity="0.68"/>
<rect x="952" y="424" width="2" height="18" fill="#ffa08c" opacity="0.68"/>
<rect x="957" y="370" width="2" height="18" fill="#ff98a4" opacity="0.68"/>
<rect x="957" y="388" width="2" height="18" fill="#70b0fc" opacity="0.68"/>
<rect x="957" y="406" width="2" height="18" fill="#80dc88" opacity="0.68"/>
<rect x="957" y="424" width="2" height="18" fill="#80b4fc" opacity="0.68"/>
<rect x="964" y="370" width="2" height="18" fill="#ff98a4" opacity="0.68"/>
<rect x="964" y="388" width="2" height="18" fill="#70b0fc" opacity="0.68"/>
<rect x="964" y="406" width="2" height="18" fill="#80dc88" opacity="0.68"/>
<rect x="964" y="424" width="2" height="18" fill="#d090fc" opacity="0.68"/>
<rect x="971" y="370" width="2" height="18" fill="#ff98a4" opacity="0.68"/>
<rect x="971" y="388" width="2" height="18" fill="#70b0fc" opacity="0.68"/>
<rect x="971" y="406" width="2" height="18" fill="#80dc88" opacity="0.68"/>
<rect x="971" y="424" width="2" height="18" fill="#ff80e8" opacity="0.68"/>
<rect x="979" y="370" width="2" height="18" fill="#ff98a4" opacity="0.68"/>
<rect x="979" y="388" width="2" height="18" fill="#70b0fc" opacity="0.68"/>
<rect x="979" y="406" width="2" height="18" fill="#80dc88" opacity="0.68"/>
<rect x="979" y="424" width="2" height="18" fill="#60d8c0" opacity="0.68"/>
<rect x="984" y="370" width="2" height="18" fill="#ff98a4" opacity="0.68"/>
<rect x="984" y="388" width="2" height="18" fill="#70b0fc" opacity="0.68"/>
<rect x="984" y="406" width="2" height="18" fill="#80dc88" opacity="0.68"/>
<rect x="984" y="424" width="2" height="18" fill="#a8a8fc" opacity="0.68"/>
<rect x="991" y="370" width="2" height="18" fill="#ff98a4" opacity="0.68"/>
<rect x="991" y="388" width="2" height="18" fill="#70b0fc" opacity="0.68"/>
<rect x="991" y="406" width="2" height="18" fill="#80dc88" opacity="0.68"/>
<rect x="991" y="424" width="2" height="18" fill="#80dc90" opacity="0.68"/>
<rect x="998" y="370" width="2" height="18" fill="#ff98a4" opacity="0.68"/>
<rect x="998" y="388" width="2" height="18" fill="#70b0fc" opacity="0.68"/>
<rect x="998" y="406" width="2" height="18" fill="#80dc88" opacity="0.68"/>
<rect x="998" y="424" width="2" height="18" fill="#ff80e8" opacity="0.68"/>
<rect x="1004" y="370" width="2" height="18" fill="#ff98a4" opacity="0.68"/>
<rect x="1004" y="388" width="2" height="18" fill="#70b0fc" opacity="0.68"/>
<rect x="1004" y="406" width="2" height="18" fill="#80dc88" opacity="0.68"/>
<rect x="1004" y="424" width="2" height="18" fill="#80b4fc" opacity="0.68"/>
<rect x="1011" y="370" width="2" height="18" fill="#ff98a4" opacity="0.68"/>
<rect x="1011" y="388" width="2" height="18" fill="#70b0fc" opacity="0.68"/>
<rect x="1011" y="406" width="2" height="18" fill="#80dc88" opacity="0.68"/>
<rect x="1011" y="424" width="2" height="18" fill="#80dc90" opacity="0.68"/>
<rect x="1018" y="370" width="2" height="18" fill="#ff98a4" opacity="0.68"/>
<rect x="1018" y="388" width="2" height="18" fill="#70b0fc" opacity="0.68"/>
<rect x="1018" y="406" width="2" height="18" fill="#80dc88" opacity="0.68"/>
<rect x="1018" y="424" width="2" height="18" fill="#80b4fc" opacity="0.68"/>
<rect x="1024" y="370" width="2" height="18" fill="#ff98a4" opacity="0.68"/>
<rect x="1024" y="388" width="2" height="18" fill="#70b0fc" opacity="0.68"/>
<rect x="1024" y="406" width="2" height="18" fill="#80dc88" opacity="0.68"/>
<rect x="1024" y="424" width="2" height="18" fill="#ff80e8" opacity="0.68"/>
<rect x="1031" y="370" width="2" height="18" fill="#ff98a4" opacity="0.68"/>
<rect x="1031" y="388" width="2" height="18" fill="#70b0fc" opacity="0.68"/>
<rect x="1031" y="406" width="2" height="18" fill="#80dc88" opacity="0.68"/>
<rect x="1031" y="424" width="2" height="18" fill="#80dc90" opacity="0.68"/>
<rect x="1038" y="370" width="2" height="18" fill="#ff98a4" opacity="0.68"/>
<rect x="1038" y="388" width="2" height="18" fill="#70b0fc" opacity="0.68"/>
<rect x="1038" y="406" width="2" height="18" fill="#80dc88" opacity="0.68"/>
<rect x="1038" y="424" width="2" height="18" fill="#80b4fc" opacity="0.68"/>
<rect x="1044" y="370" width="1" height="18" fill="#ff98a4" opacity="0.55"/>
<rect x="1044" y="388" width="1" height="18" fill="#70b0fc" opacity="0.55"/>
<rect x="1044" y="406" width="1" height="18" fill="#80dc88" opacity="0.55"/>
<rect x="1044" y="424" width="1" height="18" fill="#ff90b0" opacity="0.55"/>
<rect x="860" y="70" width="185" height="2" fill="#c6ecd0"/>
<rect x="854" y="102" width="191" height="4" fill="#e8c8f8"/>
<rect x="854" y="128" width="96" height="12" fill="#f8b0f4"/>
<rect x="950" y="121" width="95" height="19" fill="#f8b0f4"/>
<rect x="780" y="196" width="1" height="18" fill="#ffe0e8" opacity="0.7"/>
<rect x="797" y="196" width="1" height="18" fill="#ffe0e8" opacity="0.7"/>
<rect x="813" y="196" width="1" height="18" fill="#ffe0e8" opacity="0.7"/>
<rect x="851" y="196" width="1" height="18" fill="#ffe0e8" opacity="0.7"/>
</svg>

<div class="abs sl" style="left:456px;top:219.5px;width:120px;">bindApplication</div>
<div class="abs sl" style="left:650px;top:219.5px;width:120px;">activityStart</div>
<div class="abs sl" style="left:749px;top:219.5px;width:120px;">Choreogr...</div>
<div class="abs sl" style="left:383px;top:237.5px;width:120px;">makeA...</div>
<div class="abs sl" style="left:501px;top:237.5px;width:120px;">Application.onCreate</div>
<div class="abs sl" style="left:749px;top:237.5px;width:120px;">traversal</div>
<div class="abs sl" style="left:441px;top:255.5px;width:120px;">m...</div>
<div class="abs sl" style="left:739px;top:255.5px;width:120px;">measure</div>
<div class="abs sl" style="left:874px;top:219.5px;width:120px;">C...</div>
<div class="abs sl" style="left:874px;top:237.5px;width:120px;">t...</div>
<div class="abs sl" style="left:873px;top:255.5px;width:120px;">I...</div>
<svg class="abs" style="left:0;top:170px" width="1045" height="40" viewBox="0 170 1045 40"><circle cx="771.5" cy="186.5" r="7.5" fill="#c81020" stroke="#000" stroke-opacity="0.65" stroke-width="1"/><text x="771.5" y="190.2" font-size="10.5" fill="#fff" text-anchor="middle" font-family="Liberation Sans">F</text><circle cx="846.5" cy="186.5" r="7.5" fill="#c88c30" stroke="#000" stroke-opacity="0.65" stroke-width="1"/><text x="846.5" y="190.2" font-size="10.5" fill="#fff" text-anchor="middle" font-family="Liberation Sans">F</text><circle cx="875.2" cy="186.5" r="7.5" fill="#149628" stroke="#000" stroke-opacity="0.65" stroke-width="1"/><text x="875.2" y="190.2" font-size="10.5" fill="#fff" text-anchor="middle" font-family="Liberation Sans">F</text><circle cx="904" cy="186.5" r="7.5" fill="#149628" stroke="#000" stroke-opacity="0.65" stroke-width="1"/><text x="904" y="190.2" font-size="10.5" fill="#fff" text-anchor="middle" font-family="Liberation Sans">F</text><circle cx="908" cy="186.5" r="7.5" fill="#149628" stroke="#000" stroke-opacity="0.65" stroke-width="1"/><text x="908" y="190.2" font-size="10.5" fill="#fff" text-anchor="middle" font-family="Liberation Sans">F</text><circle cx="920.8" cy="186.5" r="7.5" fill="#c81020" stroke="#000" stroke-opacity="0.65" stroke-width="1"/><text x="920.8" y="190.2" font-size="10.5" fill="#fff" text-anchor="middle" font-family="Liberation Sans">F</text><circle cx="947" cy="186.5" r="7.5" fill="#149628" stroke="#000" stroke-opacity="0.65" stroke-width="1"/><text x="947" y="190.2" font-size="10.5" fill="#fff" text-anchor="middle" font-family="Liberation Sans">F</text><circle cx="953.7" cy="186.5" r="7.5" fill="#149628" stroke="#000" stroke-opacity="0.65" stroke-width="1"/><text x="953.7" y="190.2" font-size="10.5" fill="#fff" text-anchor="middle" font-family="Liberation Sans">F</text><circle cx="960.4" cy="186.5" r="7.5" fill="#149628" stroke="#000" stroke-opacity="0.65" stroke-width="1"/><text x="960.4" y="190.2" font-size="10.5" fill="#fff" text-anchor="middle" font-family="Liberation Sans">F</text><circle cx="967.1" cy="186.5" r="7.5" fill="#149628" stroke="#000" stroke-opacity="0.65" stroke-width="1"/><text x="967.1" y="190.2" font-size="10.5" fill="#fff" text-anchor="middle" font-family="Liberation Sans">F</text><circle cx="973.8" cy="186.5" r="7.5" fill="#149628" stroke="#000" stroke-opacity="0.65" stroke-width="1"/><text x="973.8" y="190.2" font-size="10.5" fill="#fff" text-anchor="middle" font-family="Liberation Sans">F</text><circle cx="980.5" cy="186.5" r="7.5" fill="#149628" stroke="#000" stroke-opacity="0.65" stroke-width="1"/><text x="980.5" y="190.2" font-size="10.5" fill="#fff" text-anchor="middle" font-family="Liberation Sans">F</text><circle cx="987.2" cy="186.5" r="7.5" fill="#149628" stroke="#000" stroke-opacity="0.65" stroke-width="1"/><text x="987.2" y="190.2" font-size="10.5" fill="#fff" text-anchor="middle" font-family="Liberation Sans">F</text><circle cx="993.9" cy="186.5" r="7.5" fill="#149628" stroke="#000" stroke-opacity="0.65" stroke-width="1"/><text x="993.9" y="190.2" font-size="10.5" fill="#fff" text-anchor="middle" font-family="Liberation Sans">F</text><circle cx="1000.6" cy="186.5" r="7.5" fill="#149628" stroke="#000" stroke-opacity="0.65" stroke-width="1"/><text x="1000.6" y="190.2" font-size="10.5" fill="#fff" text-anchor="middle" font-family="Liberation Sans">F</text><circle cx="1007.3" cy="186.5" r="7.5" fill="#149628" stroke="#000" stroke-opacity="0.65" stroke-width="1"/><text x="1007.3" y="190.2" font-size="10.5" fill="#fff" text-anchor="middle" font-family="Liberation Sans">F</text><circle cx="1014" cy="186.5" r="7.5" fill="#149628" stroke="#000" stroke-opacity="0.65" stroke-width="1"/><text x="1014" y="190.2" font-size="10.5" fill="#fff" text-anchor="middle" font-family="Liberation Sans">F</text><circle cx="1020.7" cy="186.5" r="7.5" fill="#149628" stroke="#000" stroke-opacity="0.65" stroke-width="1"/><text x="1020.7" y="190.2" font-size="10.5" fill="#fff" text-anchor="middle" font-family="Liberation Sans">F</text><circle cx="1027.4" cy="186.5" r="7.5" fill="#149628" stroke="#000" stroke-opacity="0.65" stroke-width="1"/><text x="1027.4" y="190.2" font-size="10.5" fill="#fff" text-anchor="middle" font-family="Liberation Sans">F</text><circle cx="1034.1" cy="186.5" r="7.5" fill="#149628" stroke="#000" stroke-opacity="0.65" stroke-width="1"/><text x="1034.1" y="190.2" font-size="10.5" fill="#fff" text-anchor="middle" font-family="Liberation Sans">F</text><circle cx="1040.8" cy="186.5" r="7.5" fill="#149628" stroke="#000" stroke-opacity="0.65" stroke-width="1"/><text x="1040.8" y="190.2" font-size="10.5" fill="#fff" text-anchor="middle" font-family="Liberation Sans">F</text><circle cx="1047.5" cy="186.5" r="7.5" fill="#149628" stroke="#000" stroke-opacity="0.65" stroke-width="1"/><text x="1047.5" y="190.2" font-size="10.5" fill="#fff" text-anchor="middle" font-family="Liberation Sans">F</text></svg>

<!-- ======= unselected shading ======= -->
<div class="abs" style="left:250px;top:26px;width:119px;height:446px;background:rgba(0,0,0,0.2)"></div>
<div class="abs" style="left:860px;top:26px;width:192px;height:31px;background:rgba(0,0,0,0.2)"></div>
<div class="abs" style="left:860px;top:57px;width:185px;height:415px;background:rgba(0,0,0,0.2)"></div>
<div class="abs" style="left:913px;top:196px;width:132px;height:18px;background:#d6b8be"></div>
<div class="abs sl" style="left:919px;top:197.5px;width:120px;font-style:italic;">animator</div>
<div class="abs" style="left:250px;top:57px;width:2px;height:415px;background:rgba(255,255,255,0.13)"></div>
<!-- selection edge lines -->
<div class="abs" style="left:369px;top:26px;width:1px;height:446px;background:#000"></div>
<div class="abs" style="left:859px;top:26px;width:1px;height:446px;background:#000"></div>

<svg class="abs" style="left:360px;top:210px" width="510" height="30" viewBox="360 210 510 30"><g fill="#000"><path d="M366.8 218 L372.2 218 L369.5 221 Z"/><path d="M366.8 236 L372.2 236 L369.5 233 Z"/><path d="M856.8 218 L862.2 218 L859.5 221 Z"/><path d="M856.8 236 L862.2 236 L859.5 233 Z"/></g></svg>
<!-- ======= ruler ======= -->
<svg class="abs" style="left:0;top:0" width="1052" height="80" viewBox="0 0 1052 80">
<g fill="#000">
<rect x="250" y="38" width="802" height="1"/>
<rect x="250" y="56" width="802" height="1"/>
<rect x="250.9" y="27" width="1.8" height="11"/>
<rect x="291" y="35" width="1" height="3"/>
<rect x="331" y="35" width="1" height="3"/>
<rect x="371" y="35" width="1" height="3"/>
<rect x="411" y="35" width="1" height="3"/>
<rect x="451.4" y="27" width="1.8" height="11"/>
<rect x="491" y="35" width="1" height="3"/>
<rect x="532" y="35" width="1" height="3"/>
<rect x="572" y="35" width="1" height="3"/>
<rect x="612" y="35" width="1" height="3"/>
<rect x="651.9" y="27" width="1.8" height="11"/>
<rect x="692" y="35" width="1" height="3"/>
<rect x="732" y="35" width="1" height="3"/>
<rect x="772" y="35" width="1" height="3"/>
<rect x="812" y="35" width="1" height="3"/>
<rect x="852.4" y="27" width="1.8" height="11"/>
<rect x="892" y="35" width="1" height="3"/>
<rect x="933" y="35" width="1" height="3"/>
<rect x="973" y="35" width="1" height="3"/>
<rect x="1013" y="35" width="1" height="3"/>
<rect x="1052.9" y="27" width="1.8" height="11"/>
</g>
<g fill="#6b6b6b" stroke="none"><rect x="378" y="47" width="203" height="1"/><rect x="647" y="47" width="204" height="1"/><path d="M370 47.5 L379.7 44.4 L379.7 50.6 Z"/><path d="M859 47.5 L849.3 44.4 L849.3 50.6 Z"/></g>
</svg>
<div class="abs tk" style="left:255px;">1,000 ms</div>
<div class="abs tk" style="left:455px;">1,500 ms</div>
<div class="abs tk" style="left:655px;">2,000 ms</div>
<div class="abs tk" style="left:855px;">2,500 ms</div>
<div class="abs" style="left:585px;top:36.5px;width:60px;height:18px;font-size:14px;line-height:18px;text-align:center;color:#000">1.223 s</div>

<!-- ======= scrollbar ======= -->
<div class="abs" style="left:1045px;top:57px;width:7px;height:415px;background:#f1f1f1"></div>
<div class="abs" style="left:1047px;top:80px;width:5px;height:30px;background:#c1c1c1"></div>
<svg class="abs" style="left:1045px;top:57px" width="7" height="415"><path d="M3.6 10.5 L7 10.5 L7 6.4 Z" fill="#505050"/><path d="M3.6 404.5 L7 404.5 L7 408.6 Z" fill="#505050"/></svg>

<!-- ======= red annotation 1 ======= -->
<div class="abs" style="left:354px;top:26px;width:520px;height:42px;border:3px solid #e6144b;background:rgba(0,0,255,0.25)"></div>

<!-- ======= analysis pane ======= -->
<div id="an" class="abs">
  <!-- drag handle -->
  <div class="abs" style="left:0;top:0;width:1052px;height:7px;background:linear-gradient(#808080 0,#808080 1px,#ffffff 1px,#ffffff 2px,#e8e8e8 2px,#d0d0d0 7px)"></div>
  <!-- tab strip -->
  <div class="abs" style="left:0;top:7px;width:1052px;height:29px;background:#eeeeee;border-bottom:1px solid #b0b4bc;box-sizing:border-box"></div>
  <div class="abs" style="left:0;top:7px;width:1052px;height:1px;background:#7e8ca4"></div>
  <div class="abs" style="left:0;top:8px;width:1052px;height:1px;background:#94a4c0"></div>
  <div class="abs" style="left:0;top:9px;width:1052px;height:1px;background:#c4d6f0"></div>
  <div class="abs" style="left:0;top:8px;width:1px;height:28px;background:#8ca8d8"></div>
  <div class="abs t12 b" style="left:20px;top:18px;">3289 items selected.</div>
  <div class="abs t12" style="left:165px;top:18px;">Async Slices (3)</div>
  <div class="abs" style="left:281px;top:14px;width:157px;height:22px;background:#fff;border:1px solid #9a9a9a;border-bottom:none;box-sizing:border-box"></div>
  <div class="abs" style="left:283px;top:16px;width:153px;height:19px;border:1px dotted #555;box-sizing:border-box"></div>
  <div class="abs t12" style="left:292px;top:18px;">Thread Timeslices (3270)</div>
  <div class="abs t12" style="left:468px;top:18px;">Slices (16)</div>

  <!-- table header -->
  <div class="abs" style="left:0;top:37px;width:706px;height:20px;background:#ececec;border-bottom:1px solid #777;box-sizing:border-box"></div>
  <div class="abs t12 b" style="left:10px;top:40px;">Name &nbsp;&#8711;</div>
  <div class="abs t12 b" style="left:358px;top:40px;">Wall Duration &nbsp;&#8711;</div>
  <div class="abs t12 b" style="left:460px;top:40px;">Average Wall Duration &nbsp;&#8711;</div>
  <div class="abs t12 b" style="left:612px;top:40px;">Occurrences &nbsp;&#8711;</div>

  <div class="abs" style="left:358px;top:59px;width:94px;height:14px;background:#e7effb;border-right:1px solid #c4d6f0;box-sizing:border-box"></div>
<div class="abs" style="left:460px;top:59px;width:1px;height:14px;background:#c4d6f0"></div>
<div class="abs t12 u" style="left:10px;top:59px;">Running</div>
<svg class="abs" style="left:78px;top:62px" width="11" height="11" viewBox="0 0 11 11"><circle cx="3.8" cy="3.8" r="3.1" fill="#efeffd" stroke="#7070dc" stroke-width="1.1"/><path d="M6.2 6.3 L7.4 7.5" stroke="#5050d8" stroke-width="1.6"/><path d="M7.2 7.3 L9.2 9.3" stroke="#2a2aa0" stroke-width="2" stroke-linecap="round"/></svg>
<div class="abs t12 r" style="left:352px;top:59px;width:100px;">624.278 ms</div>
<div class="abs t12 r" style="left:504px;top:59px;width:100px;">0.562 ms</div>
<div class="abs t12" style="left:612px;top:59px;">1110</div>
<div class="abs" style="left:358px;top:77px;width:63px;height:14px;background:#e7effb;border-right:1px solid #c4d6f0;box-sizing:border-box"></div>
<div class="abs" style="left:460px;top:77px;width:1px;height:14px;background:#c4d6f0"></div>
<div class="abs t12 u" style="left:10px;top:77px;">Sleeping</div>
<svg class="abs" style="left:80px;top:80px" width="11" height="11" viewBox="0 0 11 11"><circle cx="3.8" cy="3.8" r="3.1" fill="#efeffd" stroke="#7070dc" stroke-width="1.1"/><path d="M6.2 6.3 L7.4 7.5" stroke="#5050d8" stroke-width="1.6"/><path d="M7.2 7.3 L9.2 9.3" stroke="#2a2aa0" stroke-width="2" stroke-linecap="round"/></svg>
<div class="abs t12 r" style="left:352px;top:77px;width:100px;">419.635 ms</div>
<div class="abs t12 r" style="left:504px;top:77px;width:100px;">1.354 ms</div>
<div class="abs t12" style="left:612px;top:77px;">310</div>
<div class="abs" style="left:358px;top:95px;width:7px;height:14px;background:#e7effb;border-right:1px solid #c4d6f0;box-sizing:border-box"></div>
<div class="abs" style="left:460px;top:95px;width:1px;height:14px;background:#c4d6f0"></div>
<div class="abs t12 u" style="left:10px;top:95px;">Runnable</div>
<svg class="abs" style="left:84px;top:98px" width="11" height="11" viewBox="0 0 11 11"><circle cx="3.8" cy="3.8" r="3.1" fill="#efeffd" stroke="#7070dc" stroke-width="1.1"/><path d="M6.2 6.3 L7.4 7.5" stroke="#5050d8" stroke-width="1.6"/><path d="M7.2 7.3 L9.2 9.3" stroke="#2a2aa0" stroke-width="2" stroke-linecap="round"/></svg>
<div class="abs t12 r" style="left:352px;top:95px;width:100px;">43.902 ms</div>
<div class="abs t12 r" style="left:504px;top:95px;width:100px;">0.040 ms</div>
<div class="abs t12" style="left:612px;top:95px;">1109</div>
<div class="abs" style="left:358px;top:113px;width:16px;height:14px;background:#e7effb;border-right:1px solid #c4d6f0;box-sizing:border-box"></div>
<div class="abs" style="left:460px;top:113px;width:1px;height:14px;background:#c4d6f0"></div>
<div class="abs t12 u" style="left:10px;top:113px;">Uninterruptible Sleep</div>
<svg class="abs" style="left:146px;top:116px" width="11" height="11" viewBox="0 0 11 11"><circle cx="3.8" cy="3.8" r="3.1" fill="#efeffd" stroke="#7070dc" stroke-width="1.1"/><path d="M6.2 6.3 L7.4 7.5" stroke="#5050d8" stroke-width="1.6"/><path d="M7.2 7.3 L9.2 9.3" stroke="#2a2aa0" stroke-width="2" stroke-linecap="round"/></svg>
<div class="abs t12 r" style="left:352px;top:113px;width:100px;">106.320 ms</div>
<div class="abs t12 r" style="left:504px;top:113px;width:100px;">0.148 ms</div>
<div class="abs t12" style="left:612px;top:113px;">717</div>
<div class="abs" style="left:358px;top:131px;width:5px;height:14px;background:#e7effb;border-right:1px solid #c4d6f0;box-sizing:border-box"></div>
<div class="abs" style="left:460px;top:131px;width:1px;height:14px;background:#c4d6f0"></div>
<div class="abs t12 u" style="left:10px;top:131px;">Uninterruptible Sleep | WakeKill - Block I/O</div>
<svg class="abs" style="left:261px;top:134px" width="11" height="11" viewBox="0 0 11 11"><circle cx="3.8" cy="3.8" r="3.1" fill="#efeffd" stroke="#7070dc" stroke-width="1.1"/><path d="M6.2 6.3 L7.4 7.5" stroke="#5050d8" stroke-width="1.6"/><path d="M7.2 7.3 L9.2 9.3" stroke="#2a2aa0" stroke-width="2" stroke-linecap="round"/></svg>
<div class="abs t12 r" style="left:352px;top:131px;width:100px;">32.428 ms</div>
<div class="abs t12 r" style="left:504px;top:131px;width:100px;">1.410 ms</div>
<div class="abs t12" style="left:612px;top:131px;">23</div>
<div class="abs" style="left:358px;top:149px;width:1px;height:14px;background:#e7effb;border-right:1px solid #c4d6f0;box-sizing:border-box"></div>
<div class="abs" style="left:460px;top:149px;width:1px;height:14px;background:#c4d6f0"></div>
<div class="abs t12 u" style="left:10px;top:149px;">Uninterruptible Sleep - Block I/O</div>
<svg class="abs" style="left:205px;top:152px" width="11" height="11" viewBox="0 0 11 11"><circle cx="3.8" cy="3.8" r="3.1" fill="#efeffd" stroke="#7070dc" stroke-width="1.1"/><path d="M6.2 6.3 L7.4 7.5" stroke="#5050d8" stroke-width="1.6"/><path d="M7.2 7.3 L9.2 9.3" stroke="#2a2aa0" stroke-width="2" stroke-linecap="round"/></svg>
<div class="abs t12 r" style="left:352px;top:149px;width:100px;">0.669 ms</div>
<div class="abs t12 r" style="left:504px;top:149px;width:100px;">0.669 ms</div>
<div class="abs t12" style="left:612px;top:149px;">1</div>

  <!-- totals -->
  <div class="abs" style="left:0;top:167px;width:706px;height:18px;background:#ececec;border-bottom:1px solid #aaa;box-sizing:border-box"></div>
  <div class="abs t12 b" style="left:10px;top:168px;">Totals</div>
  <div class="abs t12 b r" style="left:352px;top:168px;width:100px;">1,227.232 ms</div>
  <div class="abs t12 b r" style="left:504px;top:168px;width:100px;">0.375 ms</div>
  <div class="abs t12 b" style="left:612px;top:168px;">3270</div>

  <!-- selection -->
  <div class="abs" style="left:0;top:204px;width:706px;height:38px;background:#ececec;border-top:1px solid #aaa;border-bottom:1px solid #aaa;box-sizing:border-box"></div>
  <div class="abs t12 b" style="left:10px;top:208px;">Selection start</div>
  <div class="abs t12 b" style="left:10px;top:226px;">Selection extent</div>
  <div class="abs t12 b r" style="left:602px;top:208px;width:100px;">1,288.963 ms</div>
  <div class="abs t12 b r" style="left:602px;top:226px;width:100px;">1,227.232 ms</div>
</div>
<!-- red annotation 2 -->
<div class="abs" style="left:6px;top:583px;width:637px;height:50px;border:3px solid #e6144b;background:rgba(0,0,255,0.25)"></div>


</div>
</body>
</html>
